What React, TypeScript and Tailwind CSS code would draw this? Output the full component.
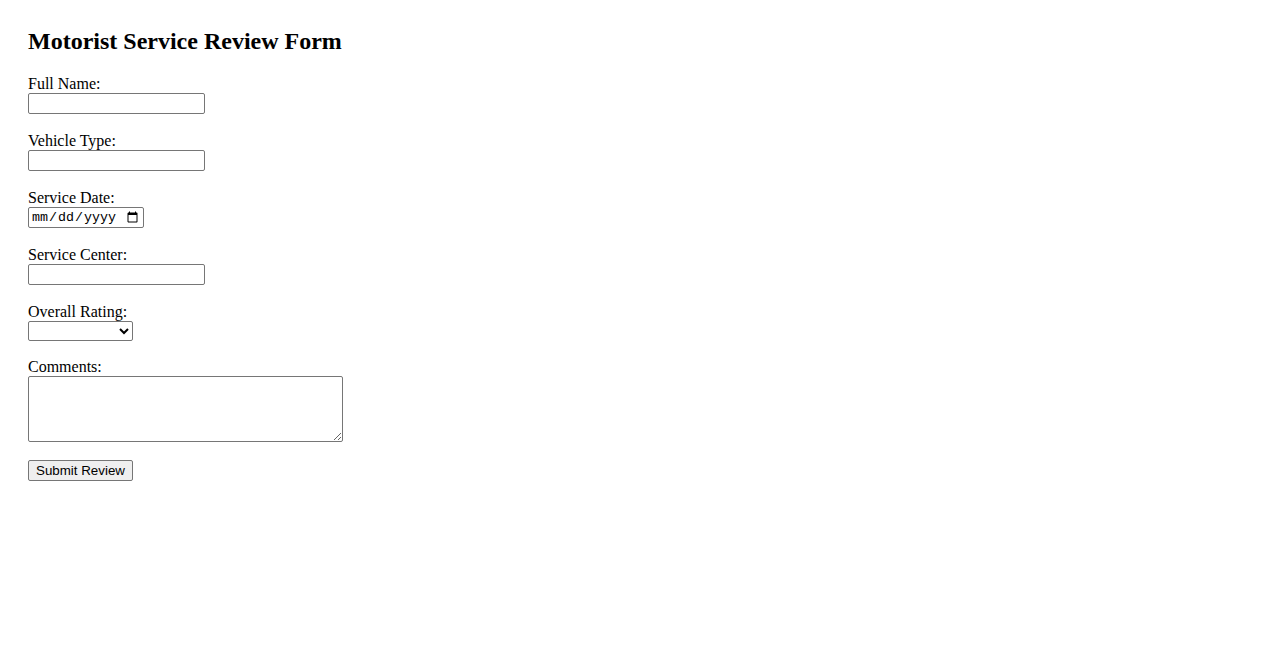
import { FC } from "react";

const inputCls =
  "block h-[21px] w-[177px] rounded-[2px] border border-[#767676] bg-white px-[2px] py-[1px] font-['Liberation_Sans',sans-serif] text-[13.33px]";

const Field: FC<{ label: string; children: React.ReactNode }> = ({
  label,
  children,
}) => (
  <div className="mb-[18px]">
    <label className="block leading-[18px]">{label}</label>
    {children}
  </div>
);

const App: FC = () => {
  return (
    <div className="min-h-[650px] bg-white pl-[28px] pt-[28px] font-['Liberation_Serif',serif] text-[16px] text-black">
      <h2 className="mb-[20px] text-[24px] font-bold leading-[27px]">
        Motorist Service Review Form
      </h2>
      <form onSubmit={(e) => e.preventDefault()}>
        <Field label="Full Name:">
          <input type="text" className={inputCls} />
        </Field>
        <Field label="Vehicle Type:">
          <input type="text" className={inputCls} />
        </Field>
        <Field label="Service Date:">
          <input
            type="date"
            className="block h-[21px] w-[116px] rounded-[2px] border border-[#767676] bg-white px-[2px] font-['Liberation_Mono',monospace] text-[13.33px]"
          />
        </Field>
        <Field label="Service Center:">
          <input type="text" className={inputCls} />
        </Field>
        <div className="mb-[17px]">
          <label className="block leading-[18px]">Overall Rating:</label>
          <select className="block h-[20px] w-[105px] rounded-[2px] border border-[#767676] bg-white font-['Liberation_Sans',sans-serif] text-[13.33px]">
            <option value=""></option>
            <option value="5">5 - Excellent</option>
            <option value="4">4 - Good</option>
            <option value="3">3 - Average</option>
            <option value="2">2 - Poor</option>
            <option value="1">1 - Terrible</option>
          </select>
        </div>
        <div className="mb-[18px]">
          <label className="block leading-[18px]">Comments:</label>
          <textarea className="block h-[66px] w-[315px] rounded-[2px] border border-[#767676] bg-white px-[2px] py-[2px] font-['Liberation_Mono',monospace] text-[13.33px]" />
        </div>
        <button
          type="submit"
          className="block h-[21px] w-[105px] rounded-[2px] border border-[#767676] bg-[#efefef] px-[6px] font-['Liberation_Sans',sans-serif] text-[13.33px] leading-none"
        >
          Submit Review
        </button>
      </form>
    </div>
  );
};

export default App;
